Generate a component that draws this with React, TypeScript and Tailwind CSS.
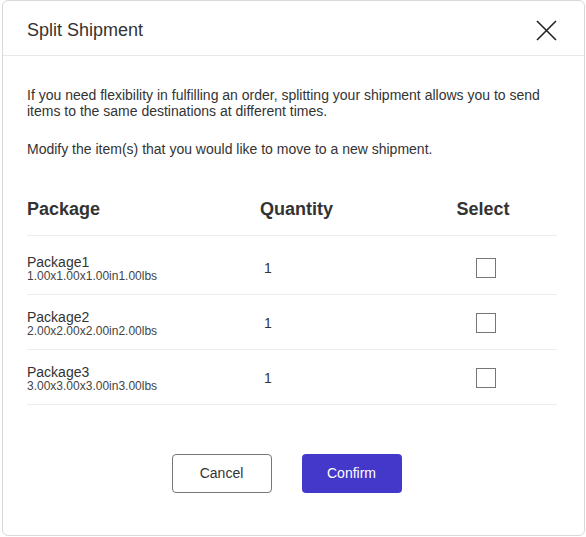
import { useState } from 'react';

const packages = [
    { name: 'Package1', dims: '1.00x1.00x1.00in1.00lbs', qty: 1 },
    { name: 'Package2', dims: '2.00x2.00x2.00in2.00lbs', qty: 1 },
    { name: 'Package3', dims: '3.00x3.00x3.00in3.00lbs', qty: 1 },
];

export default function App() {
    const [selected, setSelected] = useState<Record<string, boolean>>({});

    return (
        <div className="w-[586px] h-[537px] bg-white font-['Liberation_Sans',Arial,sans-serif] text-[#333]">
            <div className="ml-[2px] w-[583px] h-[536px] border border-[#d9d9d9] rounded-[6px] flex flex-col">
                {/* header */}
                <div className="h-[55px] shrink-0 flex items-center justify-between pl-[24px] pr-[27px] pt-[4px] border-b border-[#e8e8e8]">
                    <h2 className="text-[18px] leading-[20px]">Split Shipment</h2>
                    <button className="w-[21px] h-[21px] flex items-center justify-center text-[#222]">
                        <svg width="21" height="21" viewBox="0 0 21 21" fill="none" stroke="currentColor" strokeWidth="1.6">
                            <path d="M1 1L20 20M20 1L1 20" />
                        </svg>
                    </button>
                </div>

                {/* body */}
                <div className="px-[24px] pt-[31px] text-[14px] leading-[16px]">
                    <p>
                        If you need flexibility in fulfilling an order, splitting your shipment allows you to send items to the same destinations at different times.
                    </p>
                    <p className="mt-[22px]">Modify the item(s) that you would like to move to a new shipment.</p>

                    <div className="mt-[42px] w-[530px]">
                        <div className="grid grid-cols-[233px_1fr_142px] pb-[16px] border-b border-[#ececec] text-[18px] leading-[20px] font-bold">
                            <span>Package</span>
                            <span>Quantity</span>
                            <span className="text-center pr-[6px]">Select</span>
                        </div>
                        {packages.map((p, i) => (
                            <div
                                key={p.name}
                                className={`grid grid-cols-[233px_1fr_142px] items-center border-b border-[#ececec] ${i === 0 ? 'h-[59px] pt-[6px]' : 'h-[55px] pt-[2px]'}`}
                            >
                                <div>
                                    <div className="text-[14px] leading-[16px]">{p.name}</div>
                                    <div className="text-[12px] leading-[13px] text-[#444]">{p.dims}</div>
                                </div>
                                <span className="pl-[4px] text-[14px]">{p.qty}</span>
                                <div className="flex justify-center">
                                    <button
                                        onClick={() => setSelected((s) => ({ ...s, [p.name]: !s[p.name] }))}
                                        className="w-[20px] h-[20px] border border-[#767676] bg-white"
                                    />
                                </div>
                            </div>
                        ))}
                    </div>
                </div>

                {/* footer */}
                <div className="mt-[49px] flex justify-center gap-[30px] pr-[14px]">
                    <button className="w-[100px] h-[39px] rounded-[4px] border border-[#767676] text-[14px] text-[#333] bg-white">
                        Cancel
                    </button>
                    <button className="w-[100px] h-[39px] rounded-[4px] bg-[#4438ca] text-[14px] text-white">
                        Confirm
                    </button>
                </div>
            </div>
        </div>
    );
}
